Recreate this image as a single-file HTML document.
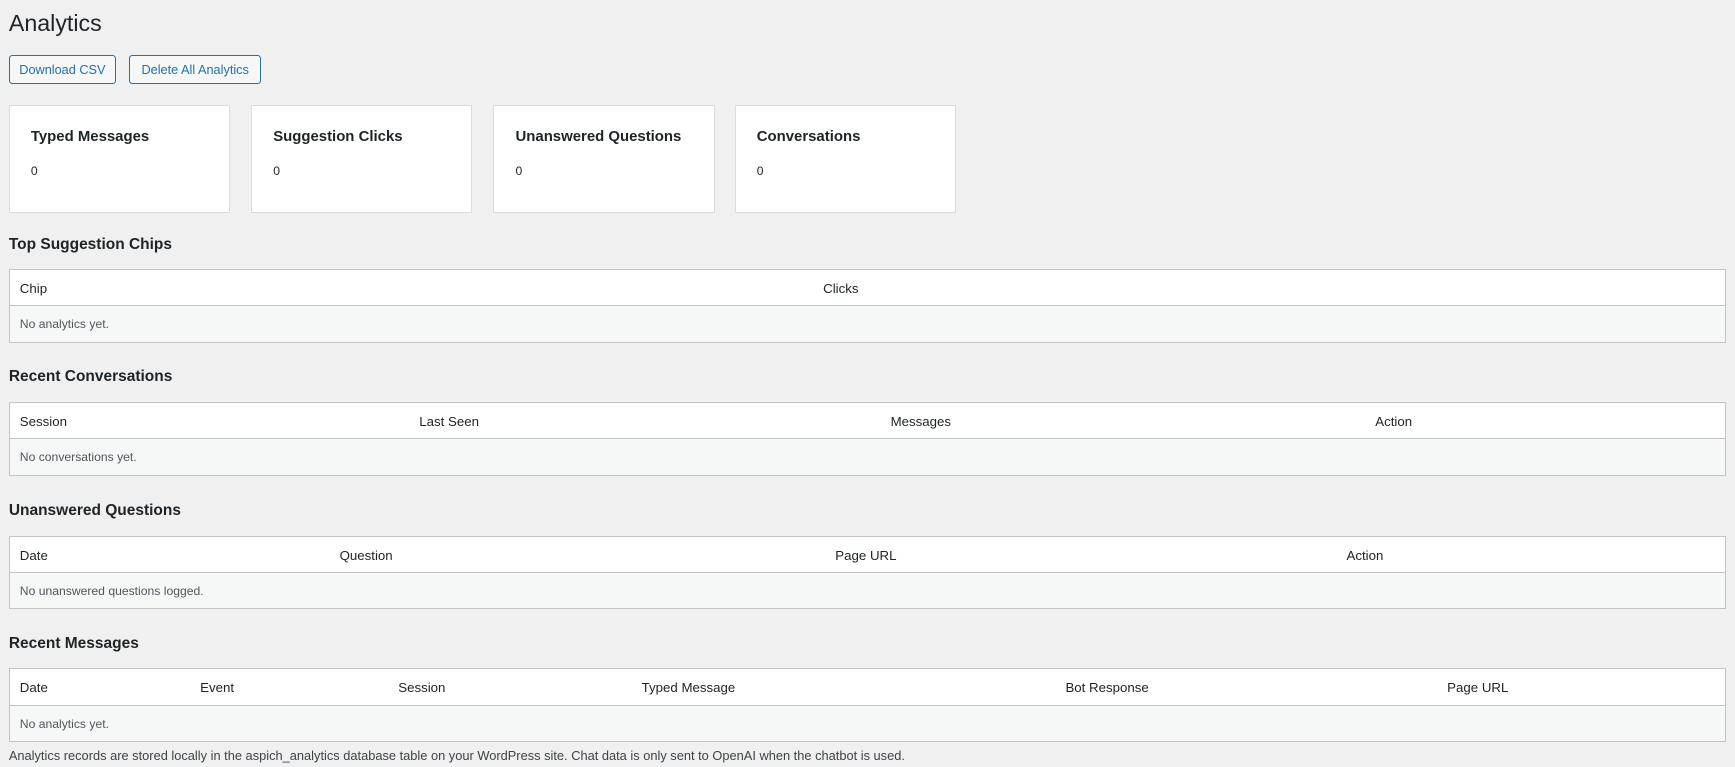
<!DOCTYPE html>
<html><head><meta charset="utf-8"><style>
html,body{margin:0;padding:0;background:#f0f0f1;width:1735px;height:767px;overflow:hidden}
#w{zoom:1.1065;position:relative;width:1568px;height:693px;font-family:"Liberation Sans",Arial,sans-serif;color:#1d2327}
.a{position:absolute;white-space:nowrap}
h1{position:absolute;left:8px;top:7px;margin:0;font-size:21px;font-weight:400;line-height:28px}
.btn{position:absolute;top:50px;height:24px;border:1px solid #2271b1;border-radius:3px;background:#f6f7f7;color:#2271b1;font-size:11.5px;line-height:26px;text-align:center}
.card{position:absolute;top:95px;width:198px;height:96px;background:#fff;border:1px solid #dcdcde}
.card b{position:absolute;left:19px;top:20px;font-size:13.5px;font-weight:700}
.card span{position:absolute;left:19px;top:52px;font-size:11px;color:#1d2327}
h2{position:absolute;left:8px;margin:0;font-size:14px;font-weight:700;line-height:18px;margin-top:1px}
.t{position:absolute;left:8px;width:1550px;height:65px;border:1px solid #c3c4c7;background:#f6f7f7}
.t .h{position:absolute;left:0;top:0;width:1550px;height:32px;background:#fff;border-bottom:1px solid #c3c4c7}
.t .h span{position:absolute;top:10px;font-size:12px;color:#1d2327}
.t .e{position:absolute;left:9px;top:43px;font-size:11px;color:#50575e}
.f{position:absolute;left:8px;top:676px;font-size:11.6px;color:#3c434a;white-space:nowrap}
</style></head><body><div id="w">
<h1>Analytics</h1>
<div class="btn" style="left:8px;width:95px">Download CSV</div>
<div class="btn" style="left:117px;width:117px">Delete All Analytics</div>
<div class="card" style="left:8px"><b>Typed Messages</b><span>0</span></div>
<div class="card" style="left:227px"><b>Suggestion Clicks</b><span>0</span></div>
<div class="card" style="left:446px"><b>Unanswered Questions</b><span>0</span></div>
<div class="card" style="left:664px"><b>Conversations</b><span>0</span></div>

<h2 style="top:211px">Top Suggestion Chips</h2>
<div class="t" style="top:243px"><div class="h"><span style="left:9px">Chip</span><span style="left:735px">Clicks</span></div><div class="e">No analytics yet.</div></div>

<h2 style="top:331px">Recent Conversations</h2>
<div class="t" style="top:363px"><div class="h"><span style="left:9px">Session</span><span style="left:370px">Last Seen</span><span style="left:796px">Messages</span><span style="left:1234px">Action</span></div><div class="e">No conversations yet.</div></div>

<h2 style="top:452px">Unanswered Questions</h2>
<div class="t" style="top:484px"><div class="h"><span style="left:9px">Date</span><span style="left:298px">Question</span><span style="left:746px">Page URL</span><span style="left:1208px">Action</span></div><div class="e">No unanswered questions logged.</div></div>

<h2 style="top:572px">Recent Messages</h2>
<div class="t" style="top:604px"><div class="h"><span style="left:9px">Date</span><span style="left:172px">Event</span><span style="left:351px">Session</span><span style="left:571px">Typed Message</span><span style="left:954px">Bot Response</span><span style="left:1299px">Page URL</span></div><div class="e">No analytics yet.</div></div>

<div class="f">Analytics records are stored locally in the aspich_analytics database table on your WordPress site. Chat data is only sent to OpenAI when the chatbot is used.</div>
</div></body></html>
